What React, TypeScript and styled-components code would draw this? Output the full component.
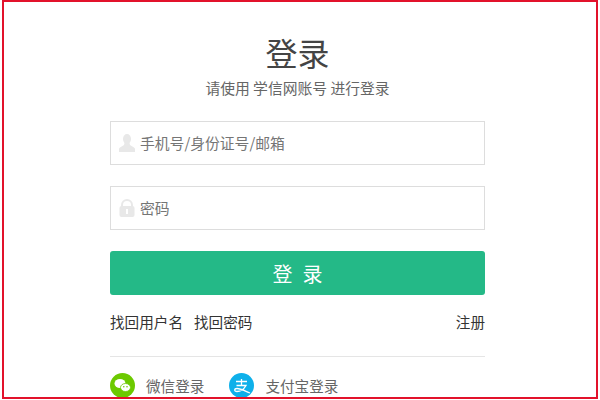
import styled, { createGlobalStyle } from 'styled-components';

const GlobalStyle = createGlobalStyle`
  html, body {
    margin: 0;
    padding: 0;
    background: #fff;
    overflow: hidden;
  }
  body {
    font-family: "Noto Sans CJK SC", "Liberation Sans", sans-serif;
  }
`;

const Frame = styled.div`
  box-sizing: border-box;
  width: 596px;
  height: 399px;
  margin-left: 2px;
  border: 2px solid #e2122b;
  overflow: hidden;
`;

const Panel = styled.div`
  width: 375px;
  margin-left: 106px;
  padding-top: 28px;
  display: flex;
  flex-direction: column;
`;

const Title = styled.h1`
  margin: 0;
  font-size: 32px;
  font-weight: 400;
  line-height: 44px;
  color: #444;
  text-align: center;
`;

const Subtitle = styled.p`
  margin: 2px 0 0;
  font-size: 14.8px;
  line-height: 24px;
  color: #666;
  text-align: center;
`;

const Field = styled.div<{ $top: number }>`
  box-sizing: border-box;
  height: 44px;
  margin-top: ${(p) => p.$top}px;
  padding-left: 8px;
  display: flex;
  align-items: center;
  gap: 5px;
  border: 1px solid #ddd;
  font-size: 14.8px;
  color: #757575;
`;

const Placeholder = styled.span`
  margin-top: -2px;
`;

const Submit = styled.button`
  height: 44px;
  margin-top: 21px;
  padding: 0 0 0 10px;
  border: 0;
  border-radius: 3px;
  background: #24b987;
  color: #fff;
  font-family: inherit;
  font-size: 20px;
  letter-spacing: 10px;
`;

const Links = styled.div`
  margin-top: 17px;
  display: flex;
  justify-content: space-between;
  font-size: 14.6px;
  line-height: 20px;
  color: #333;
`;

const LinkGroup = styled.div`
  display: flex;
  gap: 11px;
`;

const Social = styled.div`
  margin-top: 24px;
  padding-top: 16px;
  display: flex;
  align-items: center;
  border-top: 1px solid #e5e5e5;
`;

const SocialItem = styled.div`
  display: flex;
  align-items: center;
  gap: 11px;
  margin-right: 25px;
  font-size: 14.6px;
  color: #666;
`;

function UserIcon() {
  return (
    <svg width="16" height="18" viewBox="0 0 16 18">
      <ellipse cx="8" cy="5" rx="4" ry="5" fill="#e8e8e8" />
      <path d="M5.5 9 L10.5 9 L11 11 L15 13.5 Q16 14 16 15 L16 18 L0 18 L0 15 Q0 14 1 13.5 L5 11 Z" fill="#e8e8e8" />
    </svg>
  );
}

function LockIcon() {
  return (
    <svg width="16" height="18" viewBox="0 0 16 18">
      <path d="M3 8 V6 a5 5 0 0 1 10 0 V8" fill="none" stroke="#e8e8e8" strokeWidth="2" />
      <rect x="0.5" y="7" width="15" height="11" rx="2" fill="#e8e8e8" />
      <rect x="7" y="10" width="2" height="5" fill="#fff" />
    </svg>
  );
}

function WechatIcon() {
  return (
    <svg width="25" height="25" viewBox="0 0 25 25">
      <circle cx="12.5" cy="12.5" r="12.5" fill="#6cc900" />
      <ellipse cx="10" cy="10.5" rx="5.5" ry="4.5" fill="#fff" />
      <ellipse cx="15.5" cy="14.5" rx="5" ry="4" fill="#fff" stroke="#6cc900" strokeWidth="0.8" />
      <circle cx="13.8" cy="13.8" r="0.8" fill="#6cc900" />
      <circle cx="17" cy="13.8" r="0.8" fill="#6cc900" />
    </svg>
  );
}

function AlipayIcon() {
  return (
    <svg width="25" height="25" viewBox="0 0 25 25">
      <circle cx="12.5" cy="12.5" r="12.5" fill="#0eb0ea" />
      <path
        d="M7 8.5 H18 M12.5 6 V12.5 M7.5 12.5 H17 C15 16 11.5 18.5 8 18.5 C5 18.5 5 15.5 8 15.5 C12 15.5 16 18 21 20"
        fill="none"
        stroke="#fff"
        strokeWidth="1.3"
      />
    </svg>
  );
}

export default function App() {
  return (
    <>
      <GlobalStyle />
      <Frame>
        <Panel>
          <Title>登录</Title>
          <Subtitle>请使用 学信网账号 进行登录</Subtitle>
          <Field $top={21}>
            <UserIcon />
            <Placeholder>手机号/身份证号/邮箱</Placeholder>
          </Field>
          <Field $top={21}>
            <LockIcon />
            <Placeholder>密码</Placeholder>
          </Field>
          <Submit>登录</Submit>
          <Links>
            <LinkGroup>
              <span>找回用户名</span>
              <span>找回密码</span>
            </LinkGroup>
            <span>注册</span>
          </Links>
          <Social>
            <SocialItem>
              <WechatIcon />
              微信登录
            </SocialItem>
            <SocialItem>
              <AlipayIcon />
              支付宝登录
            </SocialItem>
          </Social>
        </Panel>
      </Frame>
    </>
  );
}
